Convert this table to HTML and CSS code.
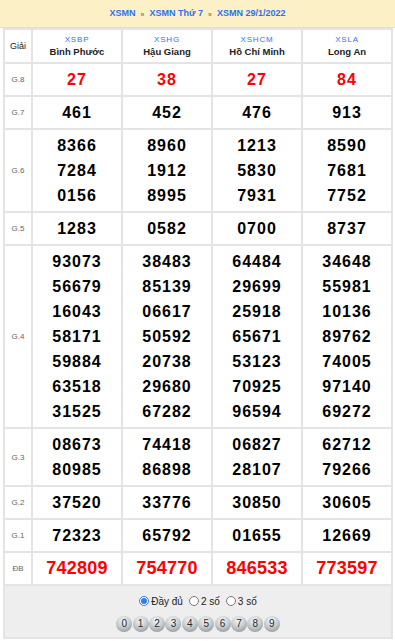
FILE: index.html
```html
<!DOCTYPE html>
<html lang="vi">
<head>
<meta charset="utf-8">
<title>XSMN 29/1/2022</title>
<link rel="stylesheet" href="styles.css">
</head>
<body>
<div class="banner">
  <a class="crumb">XSMN</a><span class="sep">»</span><a class="crumb">XSMN Thứ 7</a><span class="sep">»</span><a class="crumb">XSMN 29/1/2022</a>
</div>
<table class="kq">
  <thead>
    <tr>
      <th class="lbl giai">Giải</th>
      <th><div class="code">XSBP</div><div class="prov">Bình Phước</div></th>
      <th><div class="code">XSHG</div><div class="prov">Hậu Giang</div></th>
      <th><div class="code">XSHCM</div><div class="prov">Hồ Chí Minh</div></th>
      <th><div class="code">XSLA</div><div class="prov">Long An</div></th>
    </tr>
  </thead>
  <tbody>
    <tr class="g8">
      <td class="lbl">G.8</td>
      <td><div>27</div></td><td><div>38</div></td><td><div>27</div></td><td><div>84</div></td>
    </tr>
    <tr>
      <td class="lbl">G.7</td>
      <td><div>461</div></td><td><div>452</div></td><td><div>476</div></td><td><div>913</div></td>
    </tr>
    <tr>
      <td class="lbl">G.6</td>
      <td><div>8366</div><div>7284</div><div>0156</div></td>
      <td><div>8960</div><div>1912</div><div>8995</div></td>
      <td><div>1213</div><div>5830</div><div>7931</div></td>
      <td><div>8590</div><div>7681</div><div>7752</div></td>
    </tr>
    <tr>
      <td class="lbl">G.5</td>
      <td><div>1283</div></td><td><div>0582</div></td><td><div>0700</div></td><td><div>8737</div></td>
    </tr>
    <tr>
      <td class="lbl">G.4</td>
      <td><div>93073</div><div>56679</div><div>16043</div><div>58171</div><div>59884</div><div>63518</div><div>31525</div></td>
      <td><div>38483</div><div>85139</div><div>06617</div><div>50592</div><div>20738</div><div>29680</div><div>67282</div></td>
      <td><div>64484</div><div>29699</div><div>25918</div><div>65671</div><div>53123</div><div>70925</div><div>96594</div></td>
      <td><div>34648</div><div>55981</div><div>10136</div><div>89762</div><div>74005</div><div>97140</div><div>69272</div></td>
    </tr>
    <tr>
      <td class="lbl">G.3</td>
      <td><div>08673</div><div>80985</div></td>
      <td><div>74418</div><div>86898</div></td>
      <td><div>06827</div><div>28107</div></td>
      <td><div>62712</div><div>79266</div></td>
    </tr>
    <tr>
      <td class="lbl">G.2</td>
      <td><div>37520</div></td><td><div>33776</div></td><td><div>30850</div></td><td><div>30605</div></td>
    </tr>
    <tr>
      <td class="lbl">G.1</td>
      <td><div>72323</div></td><td><div>65792</div></td><td><div>01655</div></td><td><div>12669</div></td>
    </tr>
    <tr class="db">
      <td class="lbl">ĐB</td>
      <td><div>742809</div></td><td><div>754770</div></td><td><div>846533</div></td><td><div>773597</div></td>
    </tr>
  </tbody>
  <tfoot>
    <tr>
      <td colspan="5" class="tools">
        <div class="opts">
          <label class="opt"><input type="radio" name="mode" checked>Đầy đủ</label>
          <label class="opt"><input type="radio" name="mode">2 số</label>
          <label class="opt"><input type="radio" name="mode">3 số</label>
        </div>
        <div class="balls">
          <span class="ball">0</span><span class="ball">1</span><span class="ball">2</span><span class="ball">3</span><span class="ball">4</span><span class="ball">5</span><span class="ball">6</span><span class="ball">7</span><span class="ball">8</span><span class="ball">9</span>
        </div>
      </td>
    </tr>
  </tfoot>
</table>
</body>
</html>
```
FILE: styles.css
```css
html, body {
  margin: 0;
  padding: 0;
  background: #ffffff;
  font-family: "Liberation Sans", Arial, sans-serif;
  color: #000;
}

.banner {
  height: 27px;
  line-height: 27px;
  background: #fcf1c6;
  border-bottom: 1px solid #f0dfa6;
  text-align: center;
  font-size: 9px;
  font-weight: bold;
}

.crumb {
  color: #2f6ff0;
}

.sep {
  color: #b07a2a;
  font-size: 7px;
  margin: 0 5px;
  position: relative;
  top: 1px;
}

.kq {
  margin-left: 3px;
  width: 390px;
  border-collapse: separate;
  border-spacing: 0;
  border-left: 2px solid #e4e4e4;
  border-top: 2px solid #e4e4e4;
  table-layout: fixed;
}

.kq th,
.kq td {
  border-right: 2px solid #e4e4e4;
  border-bottom: 2px solid #e4e4e4;
  padding: 3px 0;
  text-align: center;
  vertical-align: middle;
}

.kq th.lbl,
.kq td.lbl {
  width: 26px;
}

.kq th {
  height: 26px;
  font-weight: normal;
}

.giai {
  font-size: 9px;
  font-weight: bold;
  color: #222;
}

.code {
  font-size: 8px;
  line-height: 12px;
  color: #2f74f5;
  letter-spacing: 0.8px;
}

.prov {
  font-size: 9.5px;
  line-height: 12px;
  font-weight: bold;
  color: #222;
}

.kq td.lbl {
  font-size: 8px;
  color: #666;
  font-weight: normal;
  letter-spacing: 0;
}

.kq td {
  font-size: 16px;
  font-weight: bold;
  line-height: 25px;
  letter-spacing: 1px;
}

.g8 td {
  color: #ff0000;
}

.g8 td.lbl,
.db td.lbl {
  color: #666;
}

.db td {
  color: #ff0000;
  font-size: 18px;
  letter-spacing: 0.2px;
}

.kq td.tools {
  background: #eeeeee;
  padding: 8px 0 5px;
  font-weight: normal;
  letter-spacing: 0;
  line-height: normal;
}

.opts {
  display: flex;
  justify-content: center;
  align-items: center;
  gap: 6px;
  height: 14px;
  font-size: 10px;
  color: #222;
}

.opt {
  display: flex;
  align-items: center;
}

.opt input {
  width: 10px;
  height: 10px;
  margin: 0 2px 0 0;
  accent-color: #2f7bf0;
}

.balls {
  margin-top: 8px;
  display: flex;
  justify-content: center;
  gap: 0.4px;
}

.ball {
  width: 16px;
  height: 16px;
  border-radius: 50%;
  background: radial-gradient(circle at 45% 30%, #f4f6f7 0%, #cdd3d5 40%, #98a1a4 80%, #7f898c 100%);
  font-size: 10px;
  line-height: 16px;
  text-align: center;
  color: #2a2a2a;
}
```
